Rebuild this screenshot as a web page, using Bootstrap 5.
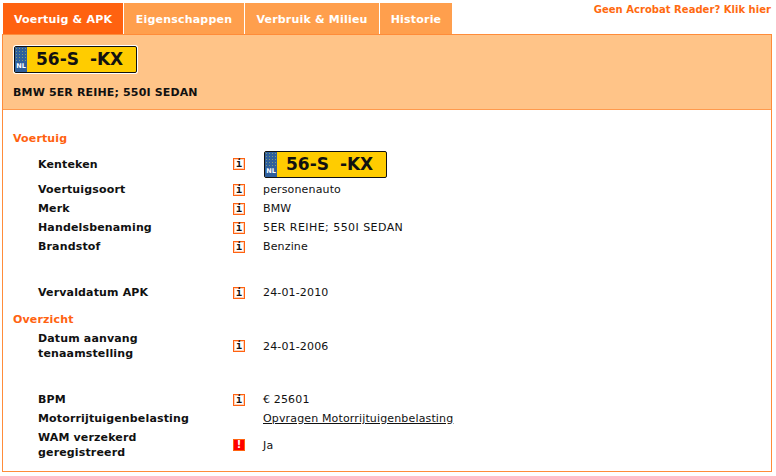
<!DOCTYPE html>
<html lang="nl">
<head>
<meta charset="utf-8">
<title>Voertuig</title>
<link href="https://cdn.jsdelivr.net/npm/bootstrap@5.3.0/dist/css/bootstrap.min.css" rel="stylesheet">
<style>
html,body{background:#fff;font-family:"DejaVu Sans",sans-serif;font-size:11px;line-height:15px;color:#111;letter-spacing:.15px;}
.shell{width:772px;padding:3px 0 0 2px;}
.tabbar{height:31px;padding-left:1px;}
.tabitem{height:31px;display:flex;align-items:center;justify-content:center;background:#ff9f4d;color:#fff;font-weight:700;font-size:11px;margin-right:1px;text-decoration:none;padding-top:1px;letter-spacing:.2px;}
.tabitem.on{background:#ff6210;}
.acro{color:#ff6a10;font-weight:700;font-size:10px;text-decoration:none;margin-top:0;line-height:13px;margin-right:1px;letter-spacing:.03px;}
.w1{width:120px}.w2{width:120px}.w3{width:134px}.w4{width:72px}
.framebox{border:1px solid #ff8c3a;height:438px;}
.headband{background:#ffc488;border-bottom:1px solid #ff9a4d;height:75px;padding:11px 0 0 11px;}
.headtitle{font-weight:700;margin-top:12px;margin-left:-1px;font-size:11px;line-height:15px;}
.plate{display:flex;width:123px;height:27px;border-radius:2px;background:#ffcc00;border:1px solid #111;box-shadow:0 0 0 1px #fff;color:#111;overflow:hidden;letter-spacing:0;}
.plate-eu{width:12px;flex:none;background-color:#2f5f9c;background-image:radial-gradient(#7f9a78 25%,transparent 45%);background-size:3px 3px;color:#fff;font-size:6.5px;line-height:9px;font-weight:700;text-align:center;display:flex;flex-direction:column;justify-content:flex-end;}
.plate-eu span{display:block;background:#2f5f9c;padding-bottom:1px;}
.plate-txt{font-weight:700;font-size:17px;line-height:25px;padding-left:9px;white-space:pre;word-spacing:5px;}
.rowsarea{padding:21px 0 0 10px;}
.sect{color:#ff6210;font-weight:700;font-size:11px;line-height:15px;}
.datarow{display:flex;align-items:center;min-height:19px;}
.lab{width:220px;padding-left:25px;font-weight:700;line-height:15px;flex:none;}
.ic{width:30px;flex:none;}
.val{flex:none;}
.val a{color:#111;}
.val .plate{margin-left:1px;}
.caps{letter-spacing:.44px;}
.r-plate{min-height:32px;margin-top:2px;}
.r-gap1{min-height:27px;}
.r-gap2{min-height:25px;}
.r-two{min-height:38px;}
.r-last{min-height:34px;}
.over{margin-top:10px;}
.infobox{display:block;width:12px;height:12px;border:1px solid #ff6210;box-shadow:inset 0 0 0 1px rgba(255,98,16,.3);background:#fff;color:#111;font-family:"DejaVu Sans Mono",monospace;font-size:10px;font-weight:700;line-height:10px;text-align:center;letter-spacing:0;}
.infobox.alert-red{background:#f00;border-color:#ff6210;box-shadow:none;color:#fff;font-family:"DejaVu Sans",sans-serif;}
</style>
</head>
<body>
<div class="shell">
  <div class="d-flex justify-content-between align-items-start tabbar">
    <div class="d-flex">
      <a class="tabitem on w1" href="#">Voertuig &amp; APK</a>
      <a class="tabitem w2" href="#">Eigenschappen</a>
      <a class="tabitem w3" href="#">Verbruik &amp; Milieu</a>
      <a class="tabitem w4" href="#">Historie</a>
    </div>
    <a class="acro" href="#">Geen Acrobat Reader? Klik hier</a>
  </div>
  <div class="framebox">
    <div class="headband">
      <div class="plate"><div class="plate-eu"><span>NL</span></div><div class="plate-txt">56-S -KX</div></div>
      <div class="headtitle">BMW 5ER REIHE; 550I SEDAN</div>
    </div>
    <div class="rowsarea">
      <div class="sect">Voertuig</div>
      <div class="datarow r-plate"><div class="lab">Kenteken</div><div class="ic"><span class="infobox">i</span></div><div class="val"><div class="plate"><div class="plate-eu"><span>NL</span></div><div class="plate-txt">56-S -KX</div></div></div></div>
      <div class="datarow"><div class="lab">Voertuigsoort</div><div class="ic"><span class="infobox">i</span></div><div class="val">personenauto</div></div>
      <div class="datarow"><div class="lab">Merk</div><div class="ic"><span class="infobox">i</span></div><div class="val">BMW</div></div>
      <div class="datarow"><div class="lab">Handelsbenaming</div><div class="ic"><span class="infobox">i</span></div><div class="val caps">5ER REIHE; 550I SEDAN</div></div>
      <div class="datarow"><div class="lab">Brandstof</div><div class="ic"><span class="infobox">i</span></div><div class="val">Benzine</div></div>
      <div class="datarow r-gap1"></div>
      <div class="datarow"><div class="lab">Vervaldatum APK</div><div class="ic"><span class="infobox">i</span></div><div class="val">24-01-2010</div></div>
      <div class="sect over">Overzicht</div>
      <div class="datarow r-two"><div class="lab">Datum aanvang<br>tenaamstelling</div><div class="ic"><span class="infobox">i</span></div><div class="val">24-01-2006</div></div>
      <div class="datarow r-gap2"></div>
      <div class="datarow"><div class="lab">BPM</div><div class="ic"><span class="infobox">i</span></div><div class="val">€ 25601</div></div>
      <div class="datarow"><div class="lab">Motorrijtuigenbelasting</div><div class="ic"></div><div class="val"><a href="#">Opvragen Motorrijtuigenbelasting</a></div></div>
      <div class="datarow r-last"><div class="lab">WAM verzekerd<br>geregistreerd</div><div class="ic"><span class="infobox alert-red">!</span></div><div class="val">Ja</div></div>
    </div>
  </div>
</div>
<script src="https://cdn.jsdelivr.net/npm/bootstrap@5.3.0/dist/js/bootstrap.bundle.min.js"></script>
</body>
</html>
